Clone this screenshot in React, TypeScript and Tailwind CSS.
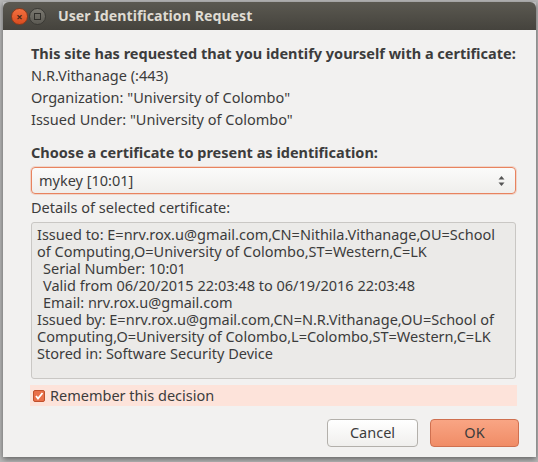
import React from "react";

const font = { fontFamily: '"Noto Sans", "DejaVu Sans", sans-serif' };

export default function App() {
  return (
    <div className="w-[538px] h-[462px] bg-[#b9b9b9] overflow-hidden" style={font}>
      <div className="ml-[3px] mt-[2px] w-[533px] h-[455px] flex flex-col shadow-[0_2px_6px_rgba(0,0,0,0.5)]">
        <div className="h-[28px] rounded-t-[6px] bg-gradient-to-b from-[#5b5951] to-[#45433d] flex items-center pl-[8px] shrink-0">
          <div className="w-[17px] h-[17px] rounded-full bg-gradient-to-b from-[#f4703f] to-[#d84c1f] border border-[#8a3a1c] flex items-center justify-center text-[#4a2a1a] text-[11px] leading-none font-bold">×</div>
          <div className="ml-[1px] w-[17px] h-[17px] rounded-full bg-gradient-to-b from-[#7a7870] to-[#5c5a53] border border-[#3a3934] flex items-center justify-center">
            <div className="w-[7px] h-[7px] border border-[#2f2e2a]" />
          </div>
          <div className="ml-[12px] text-[#dfdbd2] font-bold text-[14.2px] leading-none">User Identification Request</div>
        </div>
        <div className="flex-1 bg-[#f2f1f0] text-[#3c3c3c] text-[14.5px] pl-[28px] pr-[20px] pt-[12px] whitespace-nowrap">
          <div className="font-bold leading-[22px]">This site has requested that you identify yourself with a certificate:</div>
          <div className="leading-[22px]">N.R.Vithanage (:443)</div>
          <div className="leading-[22px]">Organization: "University of Colombo"</div>
          <div className="leading-[22px]">Issued Under: "University of Colombo"</div>
          <div className="font-bold leading-[22px] mt-[11px]">Choose a certificate to present as identification:</div>
          <div className="mt-[4px] h-[27px] rounded-[4px] border border-[#e8835f] bg-gradient-to-b from-[#fbfbfa] to-[#efeeec] shadow-[0_0_0_1px_rgba(240,160,130,0.35)] flex items-center justify-between pl-[7px] pr-[10px]">
            <span>mykey [10:01]</span>
            <svg width="7" height="12" viewBox="0 0 7 12">
              <path d="M0.5 4.5 L3.5 1 L6.5 4.5 Z" fill="#555" />
              <path d="M0.5 7.5 L3.5 11 L6.5 7.5 Z" fill="#555" />
            </svg>
          </div>
          <div className="leading-[22px] mt-[2px]">Details of selected certificate:</div>
          <div className="mt-[4px] h-[157px] rounded-[3px] border border-[#c9c7c4] bg-[#ebeae8] px-[5px] pt-[3px] leading-[17px]">
            <div>Issued to: E=nrv.rox.u@gmail.com,CN=Nithila.Vithanage,OU=School</div>
            <div>of Computing,O=University of Colombo,ST=Western,C=LK</div>
            <div className="pl-[6px]">Serial Number: 10:01</div>
            <div className="pl-[6px]">Valid from 06/20/2015 22:03:48 to 06/19/2016 22:03:48</div>
            <div className="pl-[6px]">Email: nrv.rox.u@gmail.com</div>
            <div>Issued by: E=nrv.rox.u@gmail.com,CN=N.R.Vithanage,OU=School of</div>
            <div>Computing,O=University of Colombo,L=Colombo,ST=Western,C=LK</div>
            <div>Stored in: Software Security Device</div>
          </div>
          <div className="mt-[6px] h-[21px] bg-[#fde3da] flex items-center pl-[3px] -ml-[1px] -mr-[1px]">
            <div className="w-[12px] h-[12px] rounded-[2px] bg-[#e9704a] border border-[#c0502c] flex items-center justify-center">
              <svg width="10" height="10" viewBox="0 0 10 10">
                <path d="M2 5 L4 7.5 L8.5 2" stroke="#fff" strokeWidth="1.8" fill="none" />
              </svg>
            </div>
            <span className="ml-[5px]">Remember this decision</span>
          </div>
          <div className="flex justify-end gap-[12px] mt-[13px] -mr-[3px]">
            <div className="w-[91px] h-[28px] rounded-[4px] border border-[#b3b0ab] bg-gradient-to-b from-[#ffffff] to-[#f0efed] flex items-center justify-center">Cancel</div>
            <div className="w-[89px] h-[28px] rounded-[4px] border border-[#cf7050] bg-gradient-to-b from-[#f9a584] to-[#f08c66] flex items-center justify-center">OK</div>
          </div>
        </div>
      </div>
    </div>
  );
}
